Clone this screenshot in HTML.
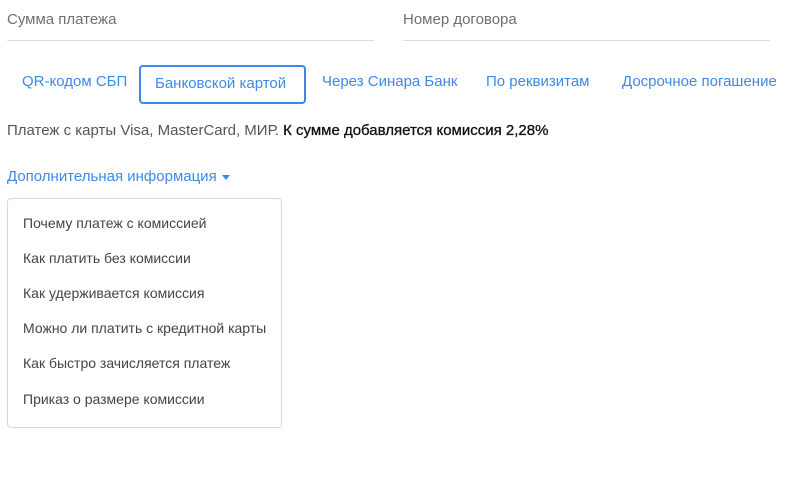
<!DOCTYPE html>
<html><head><meta charset="utf-8"><style>
body{margin:0;width:800px;height:486px;background:#fff;font-family:"Liberation Sans",sans-serif;position:relative;overflow:hidden}
.a{position:absolute;white-space:nowrap}
.lbl{font-size:15px;color:#6f6f6f}
.line{position:absolute;height:1px;background:#dcdfe3}
.tab{font-size:15px;color:#3d8ae6}
.box{position:absolute;left:139px;top:65px;width:163px;height:35px;border:2px solid #3d8ae6;border-radius:4px}
.dd{position:absolute;left:7px;top:198px;width:273px;height:228px;border:1px solid #d8d8d8;border-radius:4px;background:#fff}
.it{font-size:14px;color:#444;left:23px}
</style></head><body>
<div class="a lbl" style="left:7px;top:11px">Сумма платежа</div>
<div class="line" style="left:7px;top:40px;width:367px"></div>
<div class="a lbl" style="left:403px;top:11px">Номер договора</div>
<div class="line" style="left:403px;top:40px;width:367px"></div>

<div class="a tab" style="left:22px;top:73px">QR-кодом СБП</div>
<div class="box"></div>
<div class="a tab" style="left:155px;top:75px">Банковской картой</div>
<div class="a tab" style="left:322px;top:73px">Через Синара Банк</div>
<div class="a tab" style="left:486px;top:73px">По реквизитам</div>
<div class="a tab" style="left:622px;top:73px">Досрочное погашение</div>

<div class="a" style="left:7px;top:122px;font-size:15px;color:#555">Платеж с карты Visa, MasterCard, МИР. <span style="color:#111;-webkit-text-stroke:0.3px #111">К сумме добавляется комиссия 2,28%</span></div>

<div class="a" style="left:7px;top:168px;font-size:15px;color:#3d8ae6">Дополнительная информация <span style="display:inline-block;width:0;height:0;border-left:4px solid transparent;border-right:4px solid transparent;border-top:5px solid #3d8ae6;vertical-align:middle;margin-left:1px"></span></div>

<div class="dd"></div>
<div class="a it" style="top:215px">Почему платеж с комиссией</div>
<div class="a it" style="top:250px">Как платить без комиссии</div>
<div class="a it" style="top:285px">Как удерживается комиссия</div>
<div class="a it" style="top:320px">Можно ли платить с кредитной карты</div>
<div class="a it" style="top:355px">Как быстро зачисляется платеж</div>
<div class="a it" style="top:391px">Приказ о размере комиссии</div>
</body></html>
